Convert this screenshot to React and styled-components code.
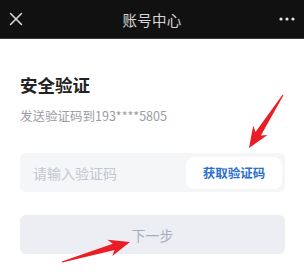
import React, { useState } from "react";
import styled, { createGlobalStyle } from "styled-components";

const GlobalStyle = createGlobalStyle`
  html, body {
    margin: 0;
    padding: 0;
    background: #ffffff;
  }
  body {
    font-family: "Noto Sans CJK SC", "Noto Sans", sans-serif;
  }
`;

const arrows = [
  { tail: [283, 95], tip: [249, 148] },
  { tail: [62, 262], tip: [130, 242] },
];

// tapered arrow: point at tail, widening shaft, notched head
const arrowPoints = ({ tail, tip }) => {
  const dx = tip[0] - tail[0];
  const dy = tip[1] - tail[1];
  const len = Math.hypot(dx, dy);
  const ux = dx / len;
  const uy = dy / len;
  const nx = -uy;
  const ny = ux;
  const at = (d, w) => [tip[0] - ux * d + nx * w, tip[1] - uy * d + ny * w];
  const pts = [
    [tail[0] + nx * 0.6, tail[1] + ny * 0.6],
    at(17, 3.2),
    at(21, 8.5),
    tip,
    at(21, -8.5),
    at(17, -3.2),
    [tail[0] - nx * 0.6, tail[1] - ny * 0.6],
  ];
  return pts.map((p) => p.map((v) => v.toFixed(1)).join(",")).join(" ");
};

const App = () => {
  const [code, setCode] = useState("");

  return (
    <Page>
      <GlobalStyle />
      <Header>
        <IconButton aria-label="close">
          <svg width="14" height="14" viewBox="0 0 14 14">
            <path
              d="M1.5 1.5 L12.5 12.5 M12.5 1.5 L1.5 12.5"
              stroke="#dcdcdc"
              strokeWidth="1.5"
              strokeLinecap="round"
            />
          </svg>
        </IconButton>
        <Title>账号中心</Title>
        <IconButton aria-label="more">
          <svg width="16" height="4" viewBox="0 0 16 4">
            <circle cx="2" cy="2" r="1.6" fill="#e6e6e6" />
            <circle cx="8" cy="2" r="1.6" fill="#e6e6e6" />
            <circle cx="14" cy="2" r="1.6" fill="#e6e6e6" />
          </svg>
        </IconButton>
      </Header>

      <Main>
        <Heading>安全验证</Heading>
        <Hint>发送验证码到193****5805</Hint>

        <CodeField>
          <CodeInput
            placeholder="请输入验证码"
            value={code}
            onChange={(e) => setCode(e.target.value)}
          />
          <SendButton type="button">获取验证码</SendButton>
        </CodeField>

        <NextButton type="button" disabled={!code}>
          下一步
        </NextButton>
      </Main>

      <Overlay width="304" height="273" viewBox="0 0 304 273">
        {arrows.map((a, i) => (
          <polygon key={i} points={arrowPoints(a)} fill="#ea1d25" />
        ))}
      </Overlay>
    </Page>
  );
};

const Page = styled.div`
  position: relative;
  width: 304px;
  height: 273px;
  overflow: hidden;
  background: #ffffff;
`;

const Header = styled.header`
  display: flex;
  align-items: center;
  justify-content: space-between;
  height: 38px;
  padding: 0 9px 0 9px;
  background: #111111;
  border-bottom: 1px solid #3a3a3a;
`;

const IconButton = styled.button`
  display: flex;
  align-items: center;
  justify-content: center;
  width: 22px;
  height: 22px;
  padding: 0;
  border: none;
  background: none;
  justify-content: ${(p) => (p["aria-label"] === "more" ? "flex-end" : "flex-start")};
`;

const Title = styled.h1`
  margin: 0;
  font-size: 14.5px;
  font-weight: 400;
  color: #d6d6d6;
  letter-spacing: 0.2px;
`;

const Main = styled.main`
  display: flex;
  flex-direction: column;
  padding: 34px 19px 0 20px;
`;

const Heading = styled.h2`
  margin: 0;
  font-size: 17.5px;
  line-height: 24px;
  font-weight: 700;
  color: #222222;
`;

const Hint = styled.p`
  margin: 10px 0 0;
  font-size: 12.5px;
  line-height: 18px;
  color: #9a9ca3;
`;

const CodeField = styled.div`
  display: flex;
  align-items: center;
  height: 39px;
  margin-top: 28px;
  padding: 0 3px 0 13px;
  box-sizing: border-box;
  border-radius: 6px;
  background: #f5f6f8;
`;

const CodeInput = styled.input`
  flex: 1;
  min-width: 0;
  padding: 0;
  border: none;
  outline: none;
  background: transparent;
  font-family: inherit;
  font-size: 14px;
  color: #333333;

  &::placeholder {
    color: #c3c6ce;
  }
`;

const SendButton = styled.button`
  width: 96px;
  height: 32px;
  padding: 0;
  border: none;
  border-radius: 8px;
  background: #ffffff;
  font-family: inherit;
  font-size: 12.5px;
  font-weight: 700;
  color: #2b6fcc;
`;

const NextButton = styled.button`
  height: 39px;
  margin-top: 23px;
  padding: 0;
  border: none;
  border-radius: 6px;
  background: #eceef4;
  font-family: inherit;
  font-size: 14px;
  color: #a6adbb;
`;

const Overlay = styled.svg`
  position: absolute;
  top: 0;
  left: 0;
  pointer-events: none;
`;

export default App;
